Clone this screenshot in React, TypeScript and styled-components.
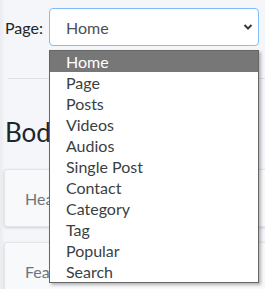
import React from "react";
import styled, { createGlobalStyle } from "styled-components";

const GlobalStyle = createGlobalStyle`
  html, body {
    margin: 0;
    padding: 0;
    background: #f4f6f9;
    font-family: Lato, "Liberation Sans", sans-serif;
    color: #212529;
    overflow: hidden;
  }
`;

const Page = styled.div`
  width: 265px;
  height: 289px;
  padding: 8px 6px 0 5px;
  box-sizing: border-box;
  background: linear-gradient(to right, #e9ebef 0, #f4f6f9 5px);
`;

const FormRow = styled.div`
  display: flex;
  align-items: center;
  gap: 6px;
`;

const Label = styled.label`
  font-size: 16px;
  color: #212529;
`;

const SelectWrap = styled.div`
  position: relative;
  flex: 1;
`;

const SelectBox = styled.div`
  height: 38px;
  box-sizing: border-box;
  border: 1px solid #80bdff;
  border-radius: 4px;
  background: #fff;
  display: flex;
  align-items: center;
  justify-content: space-between;
  padding: 0 5px 0 16px;
  font-size: 16px;
  color: #495057;
`;

const Chevron = styled.svg`
  width: 10px;
  height: 8px;
`;

const List = styled.ul`
  position: absolute;
  top: 42px;
  left: 0;
  right: 0;
  margin: 0;
  padding: 0;
  list-style: none;
  background: #fff;
  border: 1px solid #666;
  box-shadow: 2px 2px 3px rgba(0, 0, 0, 0.28);
  z-index: 10;
`;

const Option = styled.li<{ $active?: boolean }>`
  height: 21px;
  line-height: 21px;
  padding-left: 16px;
  font-size: 16px;
  color: ${({ $active }) => ($active ? "#fff" : "#3a3f44")};
  background: ${({ $active }) => ($active ? "#777" : "transparent")};
`;

const Divider = styled.hr`
  margin: 32px -6px 0 3px;
  border: 0;
  border-top: 1px solid #dde0e4;
`;

const Heading = styled.h3`
  margin: 38px 0 0 0;
  font-size: 26px;
  font-weight: 400;
  line-height: 1.2;
  color: #212529;
`;

const Cards = styled.div`
  display: flex;
  flex-direction: column;
  gap: 15px;
  margin: 21px -10px 0 -1px;
`;

const Card = styled.div`
  height: 58px;
  box-sizing: border-box;
  background: #f8f9fa;
  border: 1px solid #e3e5e8;
  border-radius: 3px;
  box-shadow: 0 1px 3px rgba(0, 0, 0, 0.15);
  display: flex;
  align-items: center;
  padding-left: 20px;
  font-size: 16px;
  color: #6c757d;
`;

const pages = [
  "Home",
  "Page",
  "Posts",
  "Videos",
  "Audios",
  "Single Post",
  "Contact",
  "Category",
  "Tag",
  "Popular",
  "Search",
];

const App: React.FC = () => {
  return (
    <>
      <GlobalStyle />
      <Page>
        <FormRow>
          <Label>Page:</Label>
          <SelectWrap>
            <SelectBox>
              <span>Home</span>
              <Chevron viewBox="0 0 10 8">
                <path d="M1.5 2 L5 5.5 L8.5 2" fill="none" stroke="#343a40" strokeWidth="2" />
              </Chevron>
            </SelectBox>
            <List>
              {pages.map((p, i) => (
                <Option key={p} $active={i === 0}>
                  {p}
                </Option>
              ))}
            </List>
          </SelectWrap>
        </FormRow>
        <Divider />
        <Heading>Body</Heading>
        <Cards>
          <Card>Header</Card>
          <Card>Featured</Card>
        </Cards>
      </Page>
    </>
  );
};

export default App;
